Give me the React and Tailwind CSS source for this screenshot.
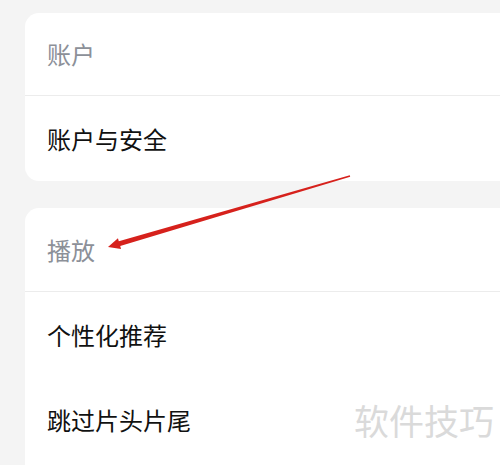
import React from 'react';

const font = { fontFamily: '"Noto Sans CJK SC", "Noto Sans", sans-serif' };

const Header = ({ label, h }) => (
  <div className={`${h} flex items-center pl-[22px] border-b border-[#ececec] text-[24px] text-[#8c9098]`}>
    {label}
  </div>
);

const Row = ({ label }) => (
  <div className="h-[85px] flex items-center pl-[22px] text-[24px] text-[#111111]">
    {label}
  </div>
);

export default function App() {
  return (
    <div
      className="relative w-[500px] h-[465px] overflow-hidden bg-[#f4f4f4] pt-[13px] flex flex-col gap-[27px]"
      style={font}
    >
      {/* 账户 */}
      <div className="ml-[25px] bg-white rounded-l-[14px]">
        <Header label="账户" h="h-[83px]" />
        <Row label="账户与安全" />
      </div>

      {/* 播放 */}
      <div className="ml-[25px] bg-white rounded-tl-[14px] flex-1">
        <Header label="播放" h="h-[84px]" />
        <Row label="个性化推荐" />
        <Row label="跳过片头片尾" />
      </div>

      {/* 标注箭头 */}
      <svg className="absolute left-0 top-0 pointer-events-none" width="500" height="465">
        <polygon
          fill="#d6211c"
          points="349.8,175.33 118.8,241.2 117.95,238.3 108,247 121.05,248.9 120.2,246 350.2,176.67"
        />
      </svg>

      {/* 水印 */}
      <div className="absolute left-[354px] top-[402px] text-[35px] leading-none text-[#dadada]">
        软件技巧
      </div>
    </div>
  );
}
